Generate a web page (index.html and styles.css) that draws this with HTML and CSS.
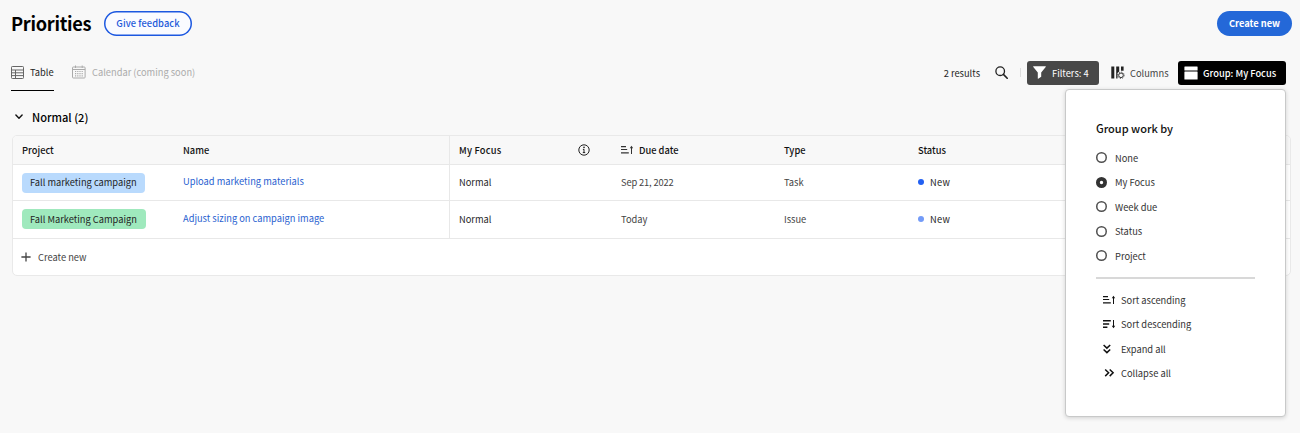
FILE: index.html
```html
<!DOCTYPE html>
<html lang="en">
<head>
<meta charset="utf-8">
<title>Priorities</title>
<link rel="stylesheet" href="styles.css">
</head>
<body>
<svg class="defs" width="0" height="0">
  <symbol id="sort-asc" viewBox="0 0 13 10"><path d="M0 1.600h5M0 4.500h6.200M0 7.800h7.800" stroke="currentColor" stroke-width="1.200" fill="none"/><path d="M10.500 9V2" stroke="currentColor" fill="none"/><path d="M8.800 3.200L10.500 .8l1.700 2.400z" fill="currentColor"/></symbol>
  <symbol id="sort-desc" viewBox="0 0 13 10"><path d="M0 1.800h7.800M0 5h6.200M0 8.200h4.400" stroke="currentColor" stroke-width="1.400" fill="none"/><path d="M10.500 1V8" stroke="currentColor" fill="none"/><path d="M8.800 6.800l1.700 2.400 1.700-2.400z" fill="currentColor"/></symbol>
</svg>
<header class="page-header">
  <h1 class="title">Priorities</h1>
  <button class="pill pill-outline">Give feedback</button>
  <button class="pill pill-primary">Create new</button>
</header>
<nav class="toolbar">
  <a class="tab tab-active">
    <svg width="13" height="13" viewBox="0 0 13 13" fill="none" stroke="#666"><rect x=".5" y=".5" width="12" height="12" rx=".8"/><path d="M.5 4h12M.5 6.800h12M.5 9.600h12M4.500 4v8.500"/></svg>
    <span>Table</span>
  </a>
  <a class="tab tab-disabled">
    <svg width="14" height="14" viewBox="0 0 14 14" fill="none" stroke="#aaa"><rect x=".5" y="2" width="12.600" height="11" rx=".8"/><path d="M.5 4.500h12.600M3.500 .5v2.500M10.200 .5v2.500"/><path d="M3 6.500h8M3 8.700h8M3 10.900h8" stroke-width="1.200" stroke-dasharray="1.200 1"/></svg>
    <span>Calendar (coming soon)</span>
  </a>
  <span class="results">2 results</span>
  <svg class="search" width="13" height="13" viewBox="0 0 13 13" fill="none" stroke="#222" stroke-width="1.300"><circle cx="5.200" cy="5.200" r="4.300"/><path d="M8.400 8.400l3.800 3.800" stroke-width="1.600" stroke-linecap="round"/></svg>
  <i class="separator"></i>
  <button class="tool tool-filter">
    <svg width="13" height="13" viewBox="0 0 13 13" fill="#fff"><path d="M.6.3h11.800c.4 0 .6.5.3.8L8.200 6.400v4.300l-3 2.100c-.2.1-.4 0-.4-.2V6.400L.3 1.100C0 .8.2.3.6.3z"/></svg>
    <span>Filters: 4</span>
  </button>
  <button class="tool tool-columns">
    <svg width="14" height="13" viewBox="0 0 14 13"><path d="M.3.5h3v12h-3zM5.200.5h3v5L6.500 7v5.500H5.200zM10 .5h2.600v4.300H10z" fill="#222"/><circle cx="10" cy="9.300" r="2.300" fill="none" stroke="#333"/><circle cx="10" cy="9.300" r="3.200" fill="none" stroke="#333" stroke-width=".9" stroke-dasharray="1.100 1.400"/></svg>
    <span>Columns</span>
  </button>
  <button class="tool tool-group">
    <svg width="14" height="14" viewBox="0 0 14 14" fill="#fff"><rect x=".4" y=".6" width="13.200" height="3.800" rx=".5"/><rect x=".4" y="5.400" width="13.200" height="8.200" rx=".5"/></svg>
    <span>Group: My Focus</span>
  </button>
</nav>
<main>
  <h2 class="group-heading">
    <svg width="8" height="6" viewBox="0 0 8 6" fill="none" stroke="#111" stroke-width="1.400" stroke-linecap="round" stroke-linejoin="round"><path d="M.9 1L4 4.300 7.100 1"/></svg>
    <span>Normal (2)</span>
  </h2>
  <section class="grid">
    <div class="row row-head">
      <div>Project</div>
      <div>Name</div>
      <div class="focus"><span>My Focus</span><svg width="12" height="12" viewBox="0 0 12 12"><circle cx="6" cy="6" r="5.200" fill="none" stroke="#222"/><path d="M6 5.200v3.600M4.900 5.400H6M4.800 8.600h2.400" stroke="#222" fill="none"/><circle cx="6" cy="3.400" r=".8" fill="#222"/></svg></div>
      <div class="due"><svg width="13" height="10"><use href="#sort-asc"/></svg><span>Due date</span></div>
      <div>Type</div>
      <div>Status</div>
    </div>
    <div class="row row-one">
      <div><span class="tag tag-blue">Fall marketing campaign</span></div>
      <div><a class="link">Upload marketing materials</a></div>
      <div class="focus">Normal</div>
      <div class="soft date">Sep 21, 2022</div>
      <div class="soft">Task</div>
      <div class="status"><i class="dot"></i>New</div>
    </div>
    <div class="row row-two">
      <div><span class="tag tag-green">Fall Marketing Campaign</span></div>
      <div><a class="link">Adjust sizing on campaign image</a></div>
      <div class="focus">Normal</div>
      <div class="soft">Today</div>
      <div class="soft">Issue</div>
      <div class="status"><i class="dot dot-light"></i>New</div>
    </div>
    <div class="add-row">
      <svg width="10" height="10" viewBox="0 0 10 10" stroke="#444" stroke-width="1.300"><path d="M5 .4v9.200M.4 5h9.200"/></svg>
      <span>Create new</span>
    </div>
  </section>
</main>
<aside class="popover">
  <h3>Group work by</h3>
  <ul class="options">
    <li><i class="radio"></i>None</li>
    <li><i class="radio radio-on"></i>My Focus</li>
    <li><i class="radio"></i>Week due</li>
    <li><i class="radio"></i>Status</li>
    <li><i class="radio"></i>Project</li>
  </ul>
  <ul class="actions">
    <li><svg width="13" height="10"><use href="#sort-asc"/></svg><span>Sort ascending</span></li>
    <li><svg width="13" height="10"><use href="#sort-desc"/></svg><span>Sort descending</span></li>
    <li><svg width="13" height="10" viewBox="0 0 13 10" fill="none" stroke="#111" stroke-width="1.500"><path d="M.6 1l3.300 3.100L7.200 1M.6 5.500l3.300 3.100 3.300-3.100"/></svg><span>Expand all</span></li>
    <li><svg width="13" height="10" viewBox="0 0 13 10" fill="none" stroke="#111" stroke-width="1.500"><path d="M2.200 1.500l3.400 3.300-3.400 3.300M6.700 1.500l3.400 3.300-3.400 3.300"/></svg><span>Collapse all</span></li>
  </ul>
</aside>
</body>
</html>
```

FILE: styles.css
```css
* { box-sizing: border-box; }
body {
  margin: 0;
  height: 433px;
  overflow: hidden;
  position: relative;
  background: #f8f8f8;
  color: #1f1f1f;
  font: 9.3px/16px "Noto Sans CJK SC", "Open Sans", sans-serif;
  white-space: nowrap;
}
h1, h2, h3, ul { margin: 0; padding: 0; font-weight: inherit; }
svg { display: block; flex: none; }
i { flex: none; }
.defs { position: absolute; }
button { font: inherit; border: 0; padding: 0; }
.page-header { display: flex; align-items: center; height: 47px; padding: 0 8px 0 11px; }
.title { font-size: 18.2px; font-weight: 700; color: #000; width: 93px; letter-spacing: -.3px; padding-bottom: 1px; }
.pill { height: 25px; border-radius: 13px; font-weight: 700; display: flex; align-items: center; justify-content: center; padding-bottom: 1px; }
.pill-outline { width: 88px; box-shadow: inset 0 0 0 1.500px #1c58e0; color: #1c58d9; background: #fafbff; font-weight: 500; letter-spacing: .08px; }
.pill-primary { width: 75px; margin-left: auto; background: #2468d8; color: #fff; }
.toolbar { display: flex; align-items: center; height: 51px; padding: 0 14px 0 11px; }
.tab { display: flex; align-items: center; height: 37px; gap: 6px; }
.tab svg { margin-bottom: 1px; }
.tab span { padding-bottom: 1px; }
.tab-active { width: 43px; margin-right: 18px; border-bottom: 1px solid #000; border-top: 1px solid transparent; }
.tab-disabled { color: #ababab; }
.results { margin-left: auto; margin-right: 15px; }
.separator { width: 1px; height: 9px; background: #ddd; margin: 0 6px 0 12px; }
.tool { display: flex; align-items: center; height: 24px; border-radius: 3px; gap: 6px; background: none; padding-left: 6px; }
.tool-filter { width: 72px; background: #484848; color: #fff; }
.tool-columns { width: 79px; color: #444; padding-left: 12px; gap: 5px; }
.tool-group { width: 108px; background: #000; color: #fff; font-weight: 500; gap: 5px; }
.group-heading { display: flex; align-items: center; gap: 9px; height: 37px; padding-left: 15px; font-size: 11.1px; font-weight: 500; color: #000; }
.grid { margin: 0 9px 0 12px; height: 141px; background: #fff; border: 1px solid #e9e9e9; border-radius: 5px; overflow: hidden; }
.row { display: grid; grid-template-columns: 161px 266px 172px 163px 134px 1fr; padding-left: 9px; border-bottom: 1px solid #e8e8e8; }
.row > div { display: flex; align-items: center; height: 100%; }
.row .focus { border-left: 1px solid #e8e8e8; padding-left: 9px; }
.row-head { height: 29px; background: #f8f8f8; font-weight: 500; color: #111; }
.row-head .focus { letter-spacing: .2px; }
.row-one { height: 36px; }
.row-two { height: 38px; }
.row-one > div { padding-bottom: 1px; }
.row-two > div { padding-bottom: 2px; }
.row > .status { letter-spacing: .3px; }
.tag { height: 20px; border-radius: 4px; padding: 0 8px 1px; margin-top: 1px; display: flex; align-items: center; }
.tag-blue { width: 123px; background: #b9dafd; }
.tag-green { width: 124px; background: #9fe9bd; }
.link { color: #2a5fd0; padding-bottom: 2px; }
.soft { color: #444; }
.date { letter-spacing: -.13px; }
.dot { width: 6px; height: 6px; border-radius: 50%; background: #2260f2; margin-right: 6px; }
.dot-light { background: #739bf8; }
.add-row { height: 36px; display: flex; align-items: center; gap: 7px; padding-left: 8px; color: #444; }
.popover { position: absolute; left: 1065px; top: 89px; width: 221px; height: 328px; padding: 28px 30px 0 30px; background: #fff; border: 1px solid #c8c9c9; border-radius: 4px; box-shadow: 0 1px 4px rgba(0,0,0,.16); color: #333; }
.popover h3 { font-size: 11px; line-height: 20px; font-weight: 500; color: #111; }
.popover ul { list-style: none; }
.popover li { display: flex; align-items: center; height: 24.500px; }
.options { padding: 7.600px 0 8.900px; border-bottom: 2px solid #d8d8d8; }
.actions { padding: 8.500px 0 0 7px; }
.actions li { gap: 5px; }
.actions svg { color: #111; }
.radio { width: 11px; height: 11px; border-radius: 50%; box-shadow: inset 0 0 0 1.500px #505050; margin-right: 8px; }
.radio-on { box-shadow: inset 0 0 0 3.800px #333; }
.row .focus svg { margin-left: auto; margin-right: 31px; }
.due svg { margin-right: 5px; color: #333; }
```
